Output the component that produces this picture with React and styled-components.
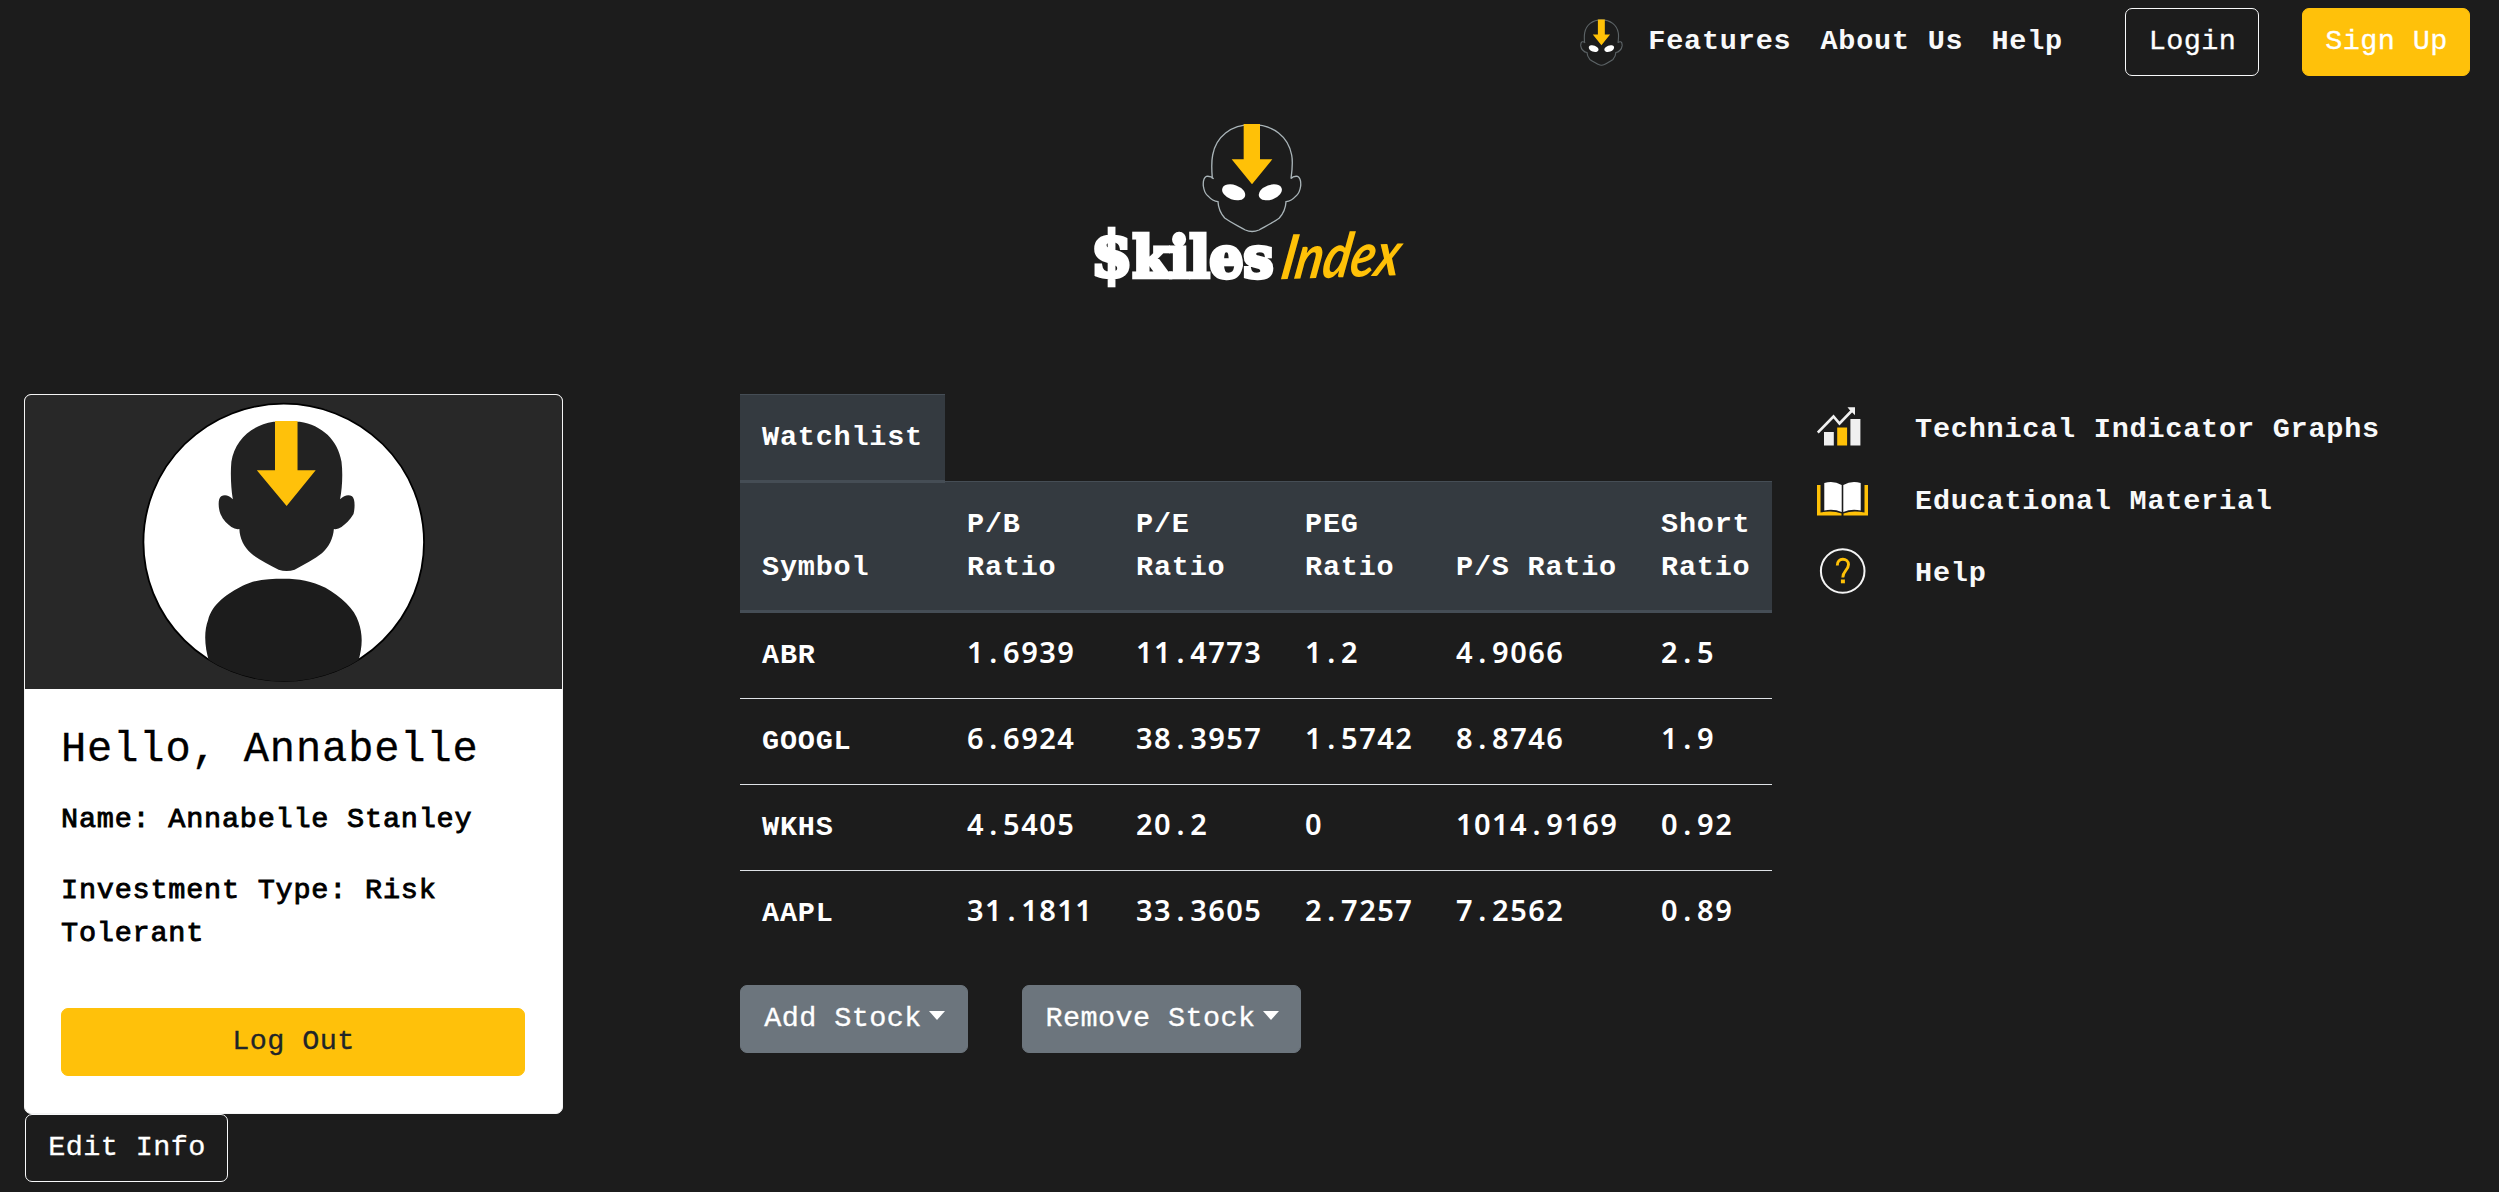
import React from "react";
import styled, { createGlobalStyle, css } from "styled-components";

const GlobalStyle = createGlobalStyle`
  *, *::before, *::after { box-sizing: border-box; }
  body {
    margin: 0;
    background: #1c1c1c;
    color: #fff;
    font-family: "Liberation Mono", monospace;
    font-size: 28.5px;
    line-height: 43px;
    letter-spacing: 0.78px;
  }
`;

const Page = styled.div`
  height: 1192px;
  overflow: hidden;
`;

const NavBar = styled.nav`
  display: flex;
  justify-content: flex-end;
  align-items: flex-start;
  height: 110px;
  padding: 8px 29px 0 0;
`;

const NavBrand = styled.a`
  display: block;
  width: 43px;
  height: 47px;
  margin: 11px 25px 0 0;
`;

const NavLink = styled.a`
  padding-top: 12px;
  margin-right: ${(p) => p.$gap}px;
  font-weight: 700;
  color: #f8f9fa;
`;

const variants = {
  outline: css`
    background: transparent;
    border-color: #f8f9fa;
    color: #fff;
  `,
  warning: css`
    background: #ffc10a;
    border-color: #ffc10a;
    color: ${(p) => (p.$dark ? "#212529" : "#fff")};
  `,
  secondary: css`
    background: #6c757d;
    border-color: #6c757d;
    color: #fff;
  `,
};

const Button = styled.button`
  display: flex;
  align-items: flex-start;
  justify-content: center;
  width: ${(p) => (p.$width ? `${p.$width}px` : "100%")};
  height: 68px;
  margin: 0;
  padding: 11px 0 0 1px;
  border: 1px solid;
  border-radius: 7px;
  font: inherit;
  letter-spacing: 0.4px;
  white-space: pre;
  -webkit-text-stroke: 0.3px currentColor;
  ${(p) => variants[p.$variant]}
`;

const Caret = styled.span`
  width: 0;
  height: 0;
  margin: 14px 0 0 7px;
  border-top: 9px solid #fff;
  border-left: 8.5px solid transparent;
  border-right: 8.5px solid transparent;
`;

const NavButtons = styled.div`
  display: flex;
  gap: 43px;
`;

const Banner = styled.header`
  display: flex;
  height: 284px;
  padding-left: 1070px;
`;

const Content = styled.main`
  display: flex;
  align-items: flex-start;
  padding-left: 24px;
`;

const Sidebar = styled.aside`
  width: 539px;
  margin-right: 177px;
`;

const Card = styled.section`
  height: 720px;
  border: 1px solid #f4f4f4;
  border-radius: 7px;
  background: #fff;
  color: #000;
  overflow: hidden;
`;

const CardBody = styled.div`
  padding: 35px 37px 0 36px;
`;

const Greeting = styled.h2`
  margin: 0 0 22px;
  font-size: 42px;
  font-weight: 400;
  line-height: 52px;
  letter-spacing: 0.9px;
  white-space: nowrap;
  -webkit-text-stroke: 0.3px #000;
`;

const Detail = styled.p`
  margin: 0 0 ${(p) => p.$gap}px;
  -webkit-text-stroke: 0.9px #000;
`;

const EditRow = styled.div`
  padding-left: 1px;
`;

const Watch = styled.section`
  width: 1032px;
  margin-right: 45px;
`;

const Tab = styled.div`
  position: relative;
  width: 205px;
  height: 89px;
  padding: 21px 0 0 22px;
  background: #343a40;
  border-top: 1px solid #454d55;
  border-bottom: 3px solid #454d55;
  font-weight: 700;
`;

const columns = css`
  display: grid;
  grid-template-columns: 205px 169px 169px 151px 205px 133px;
`;

const HeadRow = styled.div`
  ${columns}
  align-items: end;
  height: 132px;
  margin-top: -2px;
  padding-bottom: 21px;
  background: #343a40;
  border-top: 1px solid #454d55;
  border-bottom: 3px solid #454d55;
`;

const HeadCell = styled.div`
  padding-left: 22px;
  font-weight: 700;
  white-space: pre-line;
`;

const Row = styled.div`
  ${columns}
  height: 86px;
  padding-top: 21px;
  border-bottom: 1px solid ${(p) => (p.$last ? "transparent" : "#dee2e6")};
`;

const Cell = styled.div`
  padding-left: 22px;
  font-weight: ${(p) => (p.$head ? 700 : 400)};
  white-space: nowrap;
`;

const Figure = styled.span`
  font-family: "Noto Sans", sans-serif;
  font-size: 29px;
  font-weight: 600;
  line-height: 1;
  letter-spacing: 1.45px;
`;

const Point = styled.span`
  padding: 0 4.3px 0 4.3px;
`;

const Actions = styled.div`
  display: flex;
  gap: 54px;
  margin-top: 28px;
`;

const Links = styled.ul`
  display: flex;
  flex-direction: column;
  gap: 14px;
  margin: 0;
  padding: 6px 0 0;
  list-style: none;
`;

const LinkItem = styled.li`
  display: flex;
  height: 58px;
`;

const LinkIcon = styled.span`
  width: 98px;
`;

const LinkText = styled.a`
  padding-top: 8px;
  font-weight: 700;
  color: #f8f9fa;
`;

const HEAD =
  "M427 206 C424 170 425 150 428 135 C438 80 482 44 546 44 C610 44 655 80 665 135 C668 150 668 170 663 206 C668 199 676 198 683 199 C691 203 693 215 692 228 C690 242 687 250 679 257 C670 267 660 274 648 275 C647 295 640 310 628 324 C612 336 590 347 567 360 Q546 369 526 360 C503 347 480 336 464 324 C452 310 445 295 444 275 C432 274 422 267 413 257 C404 250 402 242 400 228 C399 215 401 203 409 199 C416 198 424 199 431 206";

function Mask({ stroke, strokeWidth }) {
  return (
    <>
      <path d={HEAD} fill="none" stroke={stroke} strokeWidth={strokeWidth} />
      <path d="M521 42 H570 V148 H607 L546 223 L485 148 H521 Z" fill="#ffc107" />
      <ellipse cx="491" cy="247" rx="36" ry="22" fill="#fff" transform="rotate(20 491 247)" />
      <ellipse cx="601" cy="247" rx="36" ry="22" fill="#fff" transform="rotate(-20 601 247)" />
    </>
  );
}

function Logo() {
  return (
    <svg width="370" height="190" viewBox="0 0 1110 570">
      <Mask stroke="#a9b4b8" strokeWidth="4" />
      <text
        x="63"
        y="500"
        textLength="547"
        lengthAdjust="spacingAndGlyphs"
        fontFamily="'DejaVu Serif', serif"
        fontWeight="700"
        fontSize="166"
        letterSpacing="0"
        fill="#fff"
        stroke="#fff"
        strokeWidth="13"
      >
        <tspan fontSize="186" dy="-3">$</tspan>
        <tspan dy="3">kiles</tspan>
      </text>
      <text
        transform="translate(627 508) rotate(-2) skewX(-12)"
        textLength="356"
        lengthAdjust="spacingAndGlyphs"
        fontFamily="Lato, sans-serif"
        fontStyle="italic"
        fontWeight="700"
        fontSize="184"
        letterSpacing="0"
        fill="#ffc107"
      >
        Index
      </text>
    </svg>
  );
}

function Avatar() {
  return (
    <svg width="537" height="294" viewBox="0 0 537 294" display="block">
      <rect width="537" height="294" fill="#282828" />
      <g transform="translate(-15 -15) scale(.3635 .33333)">
        <clipPath id="disc">
          <ellipse cx="753" cy="487" rx="387" ry="417" />
        </clipPath>
        <ellipse cx="753" cy="487" rx="386" ry="416" fill="#fff" stroke="#000" strokeWidth="5" />
        <path
          clipPath="url(#disc)"
          d="M548 845 C535 800 533 755 545 720 C556 670 600 640 640 617 C680 597 715 596 753 596 C795 596 830 603 868 623 C910 650 948 685 959 727 C971 765 970 800 958 845 L958 920 H548 Z"
          fill="#1c1c1c"
        />
        <path
          d="M613 358 C608 325 606 280 609 245 C618 180 665 135 725 125 H797 C858 135 902 180 912 245 C916 280 914 325 908 358 C920 345 932 343 941 349 C950 357 949 385 945 402 C935 420 923 432 912 441 Q902 449 891 447 C889 475 878 500 858 520 C838 538 812 552 783 569 Q761 577 739 569 C710 552 682 538 663 520 C643 500 632 475 631 447 Q620 449 609 441 C598 432 586 420 579 402 C573 385 571 357 581 349 C590 343 602 345 613 358 Z"
          fill="#222"
        />
        <path d="M729 123 H791 V271 H841 L761 378 L679 271 H729 Z" fill="#ffc10a" />
      </g>
    </svg>
  );
}

function GraphIcon() {
  return (
    <svg width="46" height="58" viewBox="0 0 46 58">
      <path d="M7 32h9.800v13.500H7zM33.400 19h10v26.500h-10z" fill="#f0f0f0" />
      <path d="M20.200 27.500h9.900v18h-9.900z" fill="#ffc107" />
      <path d="M.8 32.500 16.500 16.500 22.500 23.500 35.500 10" fill="none" stroke="#f0f0f0" strokeWidth="2.600" />
      <path d="M30.500 7.300h7.500v8l-2-2-3.500-3.500z" fill="#f0f0f0" />
    </svg>
  );
}

function BookIcon() {
  return (
    <svg width="52" height="58" viewBox="0 0 52 58">
      <path
        d="M0 13h3.500v27.500q12-2.500 21 1v2H0zM51 13h-3.500v27.500q-12-2.500-21 1v2H51z"
        fill="#ffc107"
      />
      <path
        d="M7.300 11q9-3 17.400 2v27q-8-3.500-17.400-1.500zM43.700 11q-9-3-17.400 2v27q8-3.500 17.400-1.500z"
        fill="#fff"
      />
    </svg>
  );
}

function HelpIcon() {
  return (
    <svg width="50" height="58" viewBox="0 0 50 58">
      <circle cx="25.700" cy="27" r="21.800" fill="none" stroke="#f4f4f4" strokeWidth="2" />
      <path
        d="M20.300 21.500C20 13 31.500 13.500 31.500 20.500 31.500 26 25.800 27 25.800 33.500"
        fill="none"
        stroke="#ffc107"
        strokeWidth="2.900"
      />
      <path d="M23.900 35.500h4v3.800h-4z" fill="#ffc107" />
    </svg>
  );
}

const headers = ["Symbol", "P/B\nRatio", "P/E\nRatio", "PEG\nRatio", "P/S Ratio", "Short\nRatio"];

const stocks = [
  ["ABR", "1.6939", "11.4773", "1.2", "4.9066", "2.5"],
  ["GOOGL", "6.6924", "38.3957", "1.5742", "8.8746", "1.9"],
  ["WKHS", "4.5405", "20.2", "0", "1014.9169", "0.92"],
  ["AAPL", "31.1811", "33.3605", "2.7257", "7.2562", "0.89"],
];

const links = [
  [GraphIcon, "Technical Indicator Graphs"],
  [BookIcon, "Educational Material"],
  [HelpIcon, "Help"],
];

function Ratio({ value }) {
  const [whole, fraction] = value.split(".");
  return (
    <Figure>
      {whole}
      {fraction && <Point>.</Point>}
      {fraction}
    </Figure>
  );
}

export default function App() {
  return (
    <Page>
      <GlobalStyle />
      <NavBar>
        <NavBrand>
          <svg width="43" height="47" viewBox="397 38 299 332">
            <Mask stroke="#5c6366" strokeWidth="8" />
          </svg>
        </NavBrand>
        <NavLink $gap={29}>Features</NavLink>
        <NavLink $gap={28}>About Us</NavLink>
        <NavLink $gap={62}>Help</NavLink>
        <NavButtons>
          <Button $variant="outline" $width={134}>Login</Button>
          <Button $variant="warning" $width={168}>Sign Up</Button>
        </NavButtons>
      </NavBar>
      <Banner>
        <Logo />
      </Banner>
      <Content>
        <Sidebar>
          <Card>
            <Avatar />
            <CardBody>
              <Greeting>Hello, Annabelle</Greeting>
              <Detail $gap={28}>Name: Annabelle Stanley</Detail>
              <Detail $gap={53}>Investment Type: Risk Tolerant</Detail>
              <Button $variant="warning" $dark>Log Out</Button>
            </CardBody>
          </Card>
          <EditRow>
            <Button $variant="outline" $width={203}>Edit Info</Button>
          </EditRow>
        </Sidebar>
        <Watch>
          <Tab>Watchlist</Tab>
          <HeadRow>
            {headers.map((h) => (
              <HeadCell key={h}>{h}</HeadCell>
            ))}
          </HeadRow>
          {stocks.map(([symbol, ...ratios], i) => (
            <Row key={symbol} $last={i === stocks.length - 1}>
              <Cell $head>{symbol}</Cell>
              {ratios.map((r, j) => (
                <Cell key={j}>
                  <Ratio value={r} />
                </Cell>
              ))}
            </Row>
          ))}
          <Actions>
            <Button $variant="secondary" $width={228}>Add Stock<Caret /></Button>
            <Button $variant="secondary" $width={279}>Remove Stock<Caret /></Button>
          </Actions>
        </Watch>
        <Links>
          {links.map(([Icon, label]) => (
            <LinkItem key={label}>
              <LinkIcon>
                <Icon />
              </LinkIcon>
              <LinkText>{label}</LinkText>
            </LinkItem>
          ))}
        </Links>
      </Content>
    </Page>
  );
}
